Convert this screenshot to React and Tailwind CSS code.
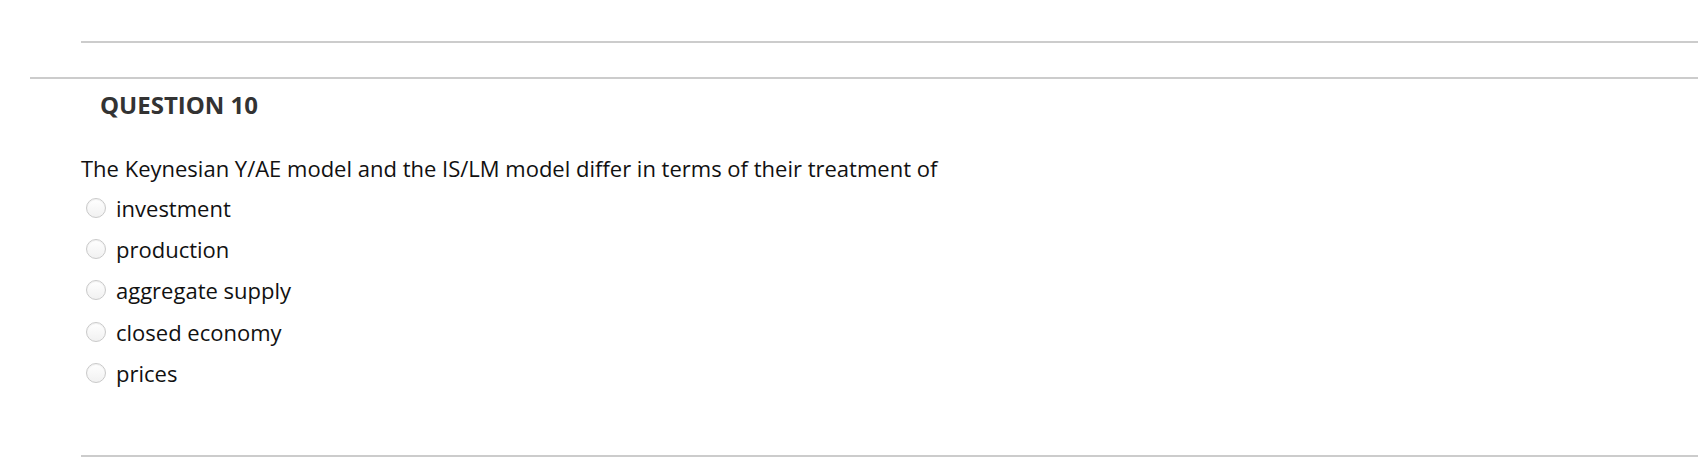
import React from 'react';

const options = ['investment', 'production', 'aggregate supply', 'closed economy', 'prices'];

const Radio = () => (
  <span className="inline-block w-[20px] h-[20px] rounded-full border border-[#c9c9c9] bg-gradient-to-b from-white to-[#f1f1f1] shadow-[inset_0_1px_1px_rgba(0,0,0,0.06)] shrink-0" />
);

export default function App() {
  return (
    <div className="bg-white w-full h-[458px] overflow-hidden pt-[41px] text-[#111111]" style={{ fontFamily: '"Open Sans", "Liberation Sans", sans-serif' }}>
      <div className="ml-[81px] h-[36px] border-t-2 border-[#cccccc]" />
      <div className="ml-[30px] border-t-2 border-[#cccccc]">
        <div className="pl-[51px]">
          {/* header */}
          <h2 className="pl-[19px] pt-[10px] text-[24px] leading-[32px] font-bold text-[#333333]">QUESTION 10</h2>

          <p className="mt-[32px] text-[22px] leading-[30px]">
            The Keynesian Y/AE model and the IS/LM model differ in terms of their treatment of
          </p>

          <ul className="mt-[4px]">
            {options.map((o) => (
              <li key={o} className="flex items-center h-[41.3px] pl-[5px]">
                <Radio />
                <span className="ml-[10px] text-[22px] leading-[30px]">{o}</span>
              </li>
            ))}
          </ul>
        </div>
      </div>
      <div className="ml-[81px] mt-[62px] border-t-2 border-[#cccccc]" />
    </div>
  );
}
